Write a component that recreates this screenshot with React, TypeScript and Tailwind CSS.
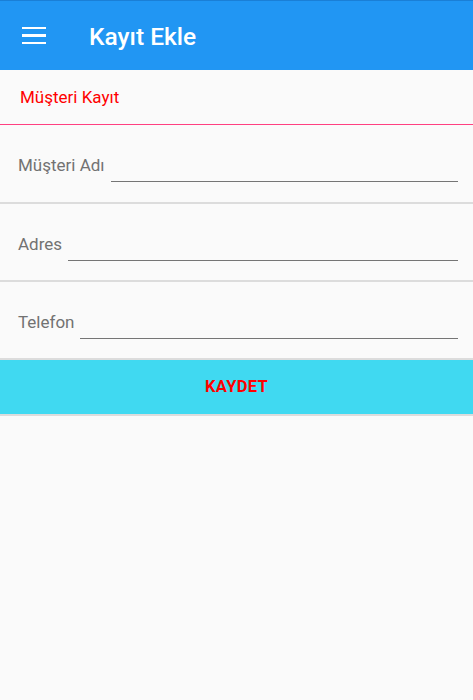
import { useState } from 'react';

const fields = [
  { label: 'Müşteri Adı', rowH: 'h-[77px]' },
  { label: 'Adres', rowH: 'h-[76px]' },
  { label: 'Telefon', rowH: 'h-[76px]' },
];

export default function App() {
  const [values, setValues] = useState<string[]>(['', '', '']);

  return (
    <div className="min-h-[700px] bg-[#fafafa] font-['Roboto',sans-serif]">
      <header className="h-[70px] bg-[#2196f3] border-t border-t-[#1a7fd6] flex items-center">
        <button className="ml-[22px] w-[24px] flex flex-col gap-[5px]">
          <span className="block h-[2.5px] bg-white" />
          <span className="block h-[2.5px] bg-white" />
          <span className="block h-[2.5px] bg-white" />
        </button>
        <h1 className="ml-[43px] pt-[3px] text-white text-[24.5px] font-medium">Kayıt Ekle</h1>
      </header>

      <div className="h-[55px] border-b border-b-[#ff4081] flex items-center px-[20px] pt-[2px]">
        <span className="text-[#ff0000] text-[17px]">Müşteri Kayıt</span>
      </div>

      {fields.map((f, i) => (
        <div key={f.label} className={`${f.rowH} box-content border-b-2 border-b-[#dcdcdc]`}>
          <div className="flex items-start w-full pl-[18px] pr-[15px] pt-[29px]">
            <label className="text-[#727272] text-[17px] leading-[22px] whitespace-nowrap">{f.label}</label>
            <input
              value={values[i]}
              onChange={e => setValues(v => v.map((x, j) => (j === i ? e.target.value : x)))}
              className="flex-1 ml-[6px] h-[28px] bg-transparent border-b border-b-[#757575] outline-none text-[17px]"
            />
          </div>
        </div>
      ))}

      <button className="w-full h-[54px] bg-[#40d9f1] border-b-2 border-b-[#dcdcdc] box-content text-[#ff0000] font-bold text-[16.5px] tracking-[0.3px]">
        KAYDET
      </button>
    </div>
  );
}
